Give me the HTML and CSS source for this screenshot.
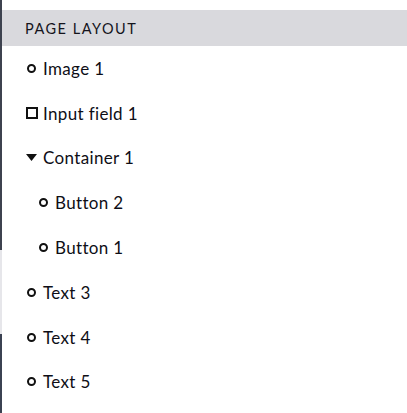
FILE: index.html
```html
<!DOCTYPE html>
<html>
<head>
<meta charset="utf-8">
<link rel="stylesheet" href="styles.css">
</head>
<body>
<div class="frame">
  <div class="edge">
    <div class="edge-dark-top"></div>
    <div class="edge-light"></div>
    <div class="edge-dark-bottom"></div>
  </div>
  <div class="panel">
    <div class="header">PAGE LAYOUT</div>
    <ul class="tree">
      <li class="row"><span class="icon circle"></span><span class="label">Image 1</span></li>
      <li class="row"><span class="icon square"></span><span class="label">Input field 1</span></li>
      <li class="row"><span class="icon caret"><svg width="11" height="7" viewBox="0 0 11 7"><path d="M0 0H11L5.5 7Z" fill="#111"/></svg></span><span class="label">Container 1</span></li>
      <li class="row child"><span class="icon circle"></span><span class="label">Button 2</span></li>
      <li class="row child"><span class="icon circle"></span><span class="label">Button 1</span></li>
      <li class="row"><span class="icon circle"></span><span class="label">Text 3</span></li>
      <li class="row"><span class="icon circle"></span><span class="label">Text 4</span></li>
      <li class="row"><span class="icon circle"></span><span class="label">Text 5</span></li>
    </ul>
  </div>
</div>
</body>
</html>
```
FILE: styles.css
```css
html, body {
  margin: 0;
  padding: 0;
  background: #ffffff;
}
body {
  font-family: "Lato", "Open Sans", sans-serif;
  color: #0e0e16;
}
.frame {
  display: flex;
  width: 407px;
  height: 413px;
  overflow: hidden;
}
.edge {
  width: 2px;
  display: flex;
  flex-direction: column;
  flex-shrink: 0;
}
.edge-dark-top {
  height: 250px;
  background: #3d424f;
}
.edge-light {
  height: 84px;
  background: #e6e6ea;
}
.edge-dark-bottom {
  flex: 1;
  background: #3b4252;
}
.panel {
  flex: 1;
  padding-top: 10px;
}
.header {
  height: 36px;
  background: #d9d9dd;
  display: flex;
  align-items: center;
  padding-left: 23px;
  font-size: 14.5px;
  letter-spacing: 1.5px;
  color: #14141c;
}
.tree {
  list-style: none;
  margin: 0;
  padding: 0;
}
.row {
  height: 44.8px;
  display: flex;
  align-items: center;
  padding-left: 23px;
  font-size: 17px;
  letter-spacing: 0.35px;
}
.row.child {
  padding-left: 35px;
}
.icon {
  width: 13px;
  height: 13px;
  display: flex;
  align-items: center;
  justify-content: center;
  margin-right: 5px;
  flex-shrink: 0;
}
.circle::before {
  content: "";
  width: 5px;
  height: 5px;
  border: 2px solid #111;
  border-radius: 50%;
}
.square::before {
  content: "";
  width: 8px;
  height: 8px;
  border: 2px solid #111;
}
.caret svg {
  display: block;
}
.label {
  line-height: 1;
}
```
